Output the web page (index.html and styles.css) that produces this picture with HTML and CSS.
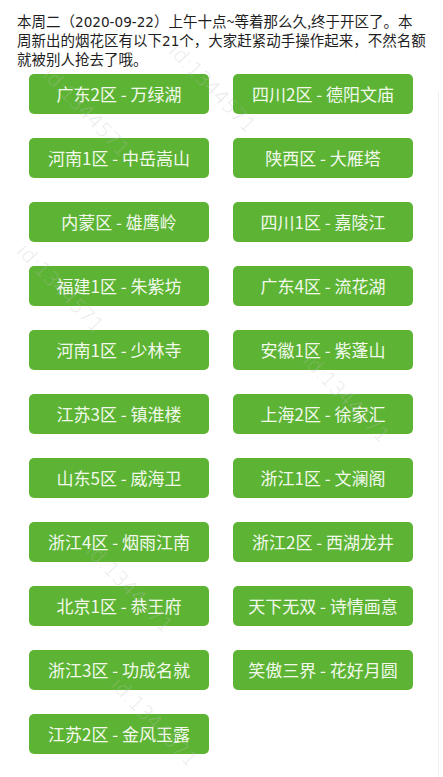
FILE: index.html
```html
<!DOCTYPE html>
<html>
<head>
    <meta charset="utf-8">
    <title>烟花区</title>
    <link rel="stylesheet" href="styles.css">
</head>
<body>
    <div id="page">
        <p class="intro">本周二（<span class="num">2020-09-22</span>）上午十点~等着那么久,终于开区了。本周新出的烟花区有以下<span class="num">21</span>个，大家赶紧动手操作起来，不然名额就被别人抢去了哦。</p>

        <div class="zones">
            <div class="zone">广东2区 - 万绿湖</div>
            <div class="zone">四川2区 - 德阳文庙</div>
            <div class="zone">河南1区 - 中岳嵩山</div>
            <div class="zone">陕西区 - 大雁塔</div>
            <div class="zone">内蒙区 - 雄鹰岭</div>
            <div class="zone">四川1区 - 嘉陵江</div>
            <div class="zone">福建1区 - 朱紫坊</div>
            <div class="zone">广东4区 - 流花湖</div>
            <div class="zone">河南1区 - 少林寺</div>
            <div class="zone">安徽1区 - 紫蓬山</div>
            <div class="zone">江苏3区 - 镇淮楼</div>
            <div class="zone">上海2区 - 徐家汇</div>
            <div class="zone">山东5区 - 威海卫</div>
            <div class="zone">浙江1区 - 文澜阁</div>
            <div class="zone">浙江4区 - 烟雨江南</div>
            <div class="zone">浙江2区 - 西湖龙井</div>
            <div class="zone">北京1区 - 恭王府</div>
            <div class="zone">天下无双 - 诗情画意</div>
            <div class="zone">浙江3区 - 功成名就</div>
            <div class="zone">笑傲三界 - 花好月圆</div>
            <div class="zone">江苏2区 - 金风玉露</div>
        </div>

        <!-- 水印 -->
        <span class="mark" style="left:180px;top:40px">id:1344571</span>
        <span class="mark" style="left:54px;top:64px">id:1344571</span>
        <span class="mark" style="left:28px;top:240px">id:1344571</span>
        <span class="mark" style="left:314px;top:350px">id:1344571</span>
        <span class="mark" style="left:97px;top:540px">id:1344571</span>
        <span class="mark" style="left:122px;top:674px">id:1344571</span>
        <div class="edge"></div>
    </div>
</body>
</html>
```

FILE: styles.css
```css
body {
    margin: 0;
    background-color: #fff;
    font-family: "Noto Sans CJK SC", "Noto Sans", sans-serif;
}

#page {
    position: relative;
    min-height: 777px;
    overflow: hidden;
}

.intro {
    margin: 0;
    padding: 11px 16px 0 17px;
    font-size: 14.5px;
    line-height: 19px;
    color: #1e1e1e;
}

.intro .num {
    font-family: "DejaVu Sans", sans-serif;
    font-size: 13.6px;
    line-height: 1;
}

.zones {
    display: grid;
    grid-template-columns: 180px 180px;
    column-gap: 24px;
    row-gap: 24px;
    padding: 6px 0 0 29px;
}

.zone {
    height: 40px;
    line-height: 40px;
    border-radius: 5px;
    background-color: #5db434;
    color: #f2f9ec;
    font-size: 17px;
    text-align: center;
    white-space: nowrap;
}

.mark {
    position: absolute;
    transform: rotate(46deg);
    transform-origin: left top;
    font-family: "DejaVu Sans", sans-serif;
    font-size: 20px;
    font-weight: 300;
    line-height: 1;
    color: rgba(190, 190, 190, 0.35);
    white-space: nowrap;
    pointer-events: none;
}

.edge {
    position: absolute;
    right: 4px;
    top: 92px;
    bottom: 0;
    width: 1px;
    background-color: #efefef;
}
```
